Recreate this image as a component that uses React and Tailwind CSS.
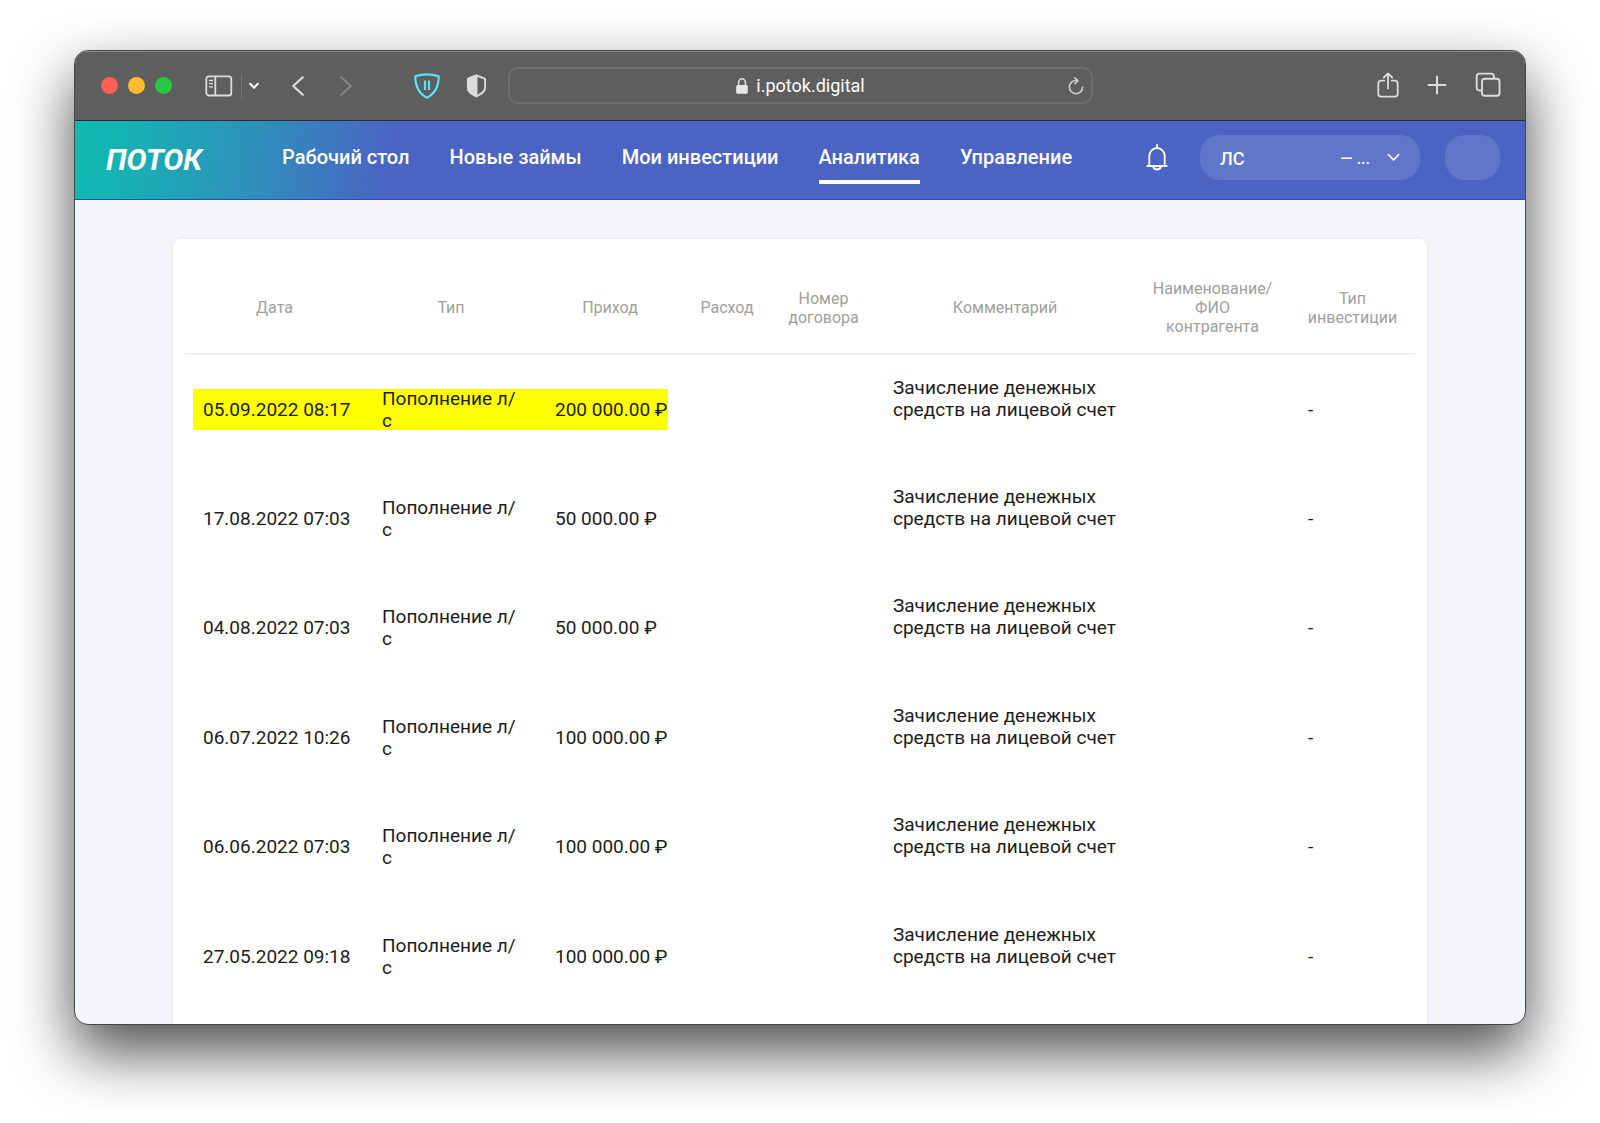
import { Fragment } from "react";

const NAV_ITEMS = [
  { label: "Рабочий стол" },
  { label: "Новые займы" },
  { label: "Мои инвестиции" },
  { label: "Аналитика", active: true },
  { label: "Управление" },
];

const COLUMNS = [
  { title: ["Дата"], width: "w-[179px]" },
  { title: ["Тип"], width: "w-[174px]" },
  { title: ["Приход"], width: "w-[144px]" },
  { title: ["Расход"], width: "w-[90px]" },
  { title: ["Номер", "договора"], width: "w-[103px]" },
  { title: ["Комментарий"], width: "w-[260px]" },
  { title: ["Наименование/", "ФИО", "контрагента"], width: "w-[155px]" },
  { title: ["Тип", "инвестиции"], width: "w-[125px]" },
];

const OPERATIONS = [
  { date: "05.09.2022 08:17", income: "200 000.00 ₽", marked: true },
  { date: "17.08.2022 07:03", income: "50 000.00 ₽" },
  { date: "04.08.2022 07:03", income: "50 000.00 ₽" },
  { date: "06.07.2022 10:26", income: "100 000.00 ₽" },
  { date: "06.06.2022 07:03", income: "100 000.00 ₽" },
  { date: "27.05.2022 09:18", income: "100 000.00 ₽" },
];

function Toolbar() {
  return (
    <div className="grid h-[70px] grid-cols-[1fr_585px_1fr] items-center border-b border-[#2a2a3a] bg-[#5e5e5f] text-[#dcdcdc] shadow-[inset_0_1px_0_#8a8a8a]">
      {/* Window buttons and navigation */}
      <div className="flex items-center pl-[26px]">
        <div className="flex gap-[10px]">
          <button aria-label="Close" className="size-[17px] rounded-full bg-[#ff5f57]" />
          <button aria-label="Minimize" className="size-[17px] rounded-full bg-[#febc2e]" />
          <button aria-label="Zoom" className="size-[17px] rounded-full bg-[#28c840]" />
        </div>
        <button aria-label="Sidebar" className="ml-[33px]">
          <svg width="28" height="22" viewBox="0 0 28 22" fill="none" stroke="currentColor" strokeWidth="1.8">
            <rect x="1.3" y="1.3" width="25" height="19.2" rx="2.6" />
            <path d="M10.3 1.3v19.2" />
            <path d="M4 5.5h4M4 8.7h4M4 11.9h4" strokeWidth="1.3" />
          </svg>
        </button>
        <span className="ml-2 h-6 w-px bg-[#747475]" />
        <button aria-label="Tab groups" className="ml-[7px]">
          <svg width="10" height="8" viewBox="0 0 10 8" fill="none" stroke="#f2f2f2" strokeWidth="2.2" strokeLinecap="round" strokeLinejoin="round">
            <path d="M1.2 1.8 5 5.8l3.8-4" />
          </svg>
        </button>
        <button aria-label="Back" className="ml-8">
          <svg width="14" height="20" viewBox="0 0 14 20" fill="none" stroke="currentColor" strokeWidth="2.2" strokeLinecap="round" strokeLinejoin="round">
            <path d="M11.8 1.3 2.2 10l9.6 8.7" />
          </svg>
        </button>
        <button aria-label="Forward" className="ml-[34px]">
          <svg width="14" height="20" viewBox="0 0 14 20" fill="none" stroke="#858586" strokeWidth="2.2" strokeLinecap="round" strokeLinejoin="round">
            <path d="m2.2 1.3 9.6 8.7-9.6 8.7" />
          </svg>
        </button>
        <button aria-label="Ad blocker" className="ml-[61px]">
          <svg width="26" height="26" viewBox="0 0 26 26" fill="none" stroke="#55e6f8" strokeWidth="2.2" strokeLinejoin="round">
            <path d="M13 1.3c4 0 7.8.6 11.7 2C24.7 13.5 21.5 20.5 13 24.7 4.5 20.5 1.3 13.5 1.3 3.3 5.2 1.9 9 1.3 13 1.3Z" />
            <path d="M11 7.5v9.5M15 7.5v9.5" />
          </svg>
        </button>
        <button aria-label="Privacy report" className="ml-[26px]">
          <svg width="21" height="24" viewBox="0 0 21 24" fill="none" stroke="currentColor" strokeWidth="1.9" strokeLinejoin="round">
            <path d="M10.5 1.5 18.2 4.3c.6.2.9.6.9 1.2v8.3c0 4.2-4.2 6.3-8.6 8.6-4.4-2.3-8.6-4.4-8.6-8.6V5.5c0-.6.3-1 .9-1.2Z" />
            <path d="M10.5 1.5v20.9c-4.4-2.3-8.6-4.4-8.6-8.6V5.5c0-.6.3-1 .9-1.2Z" fill="currentColor" />
          </svg>
        </button>
      </div>

      {/* Address bar */}
      <div className="flex h-[37px] items-center rounded-[10px] border-2 border-[#6d6d6e] pr-[7px] pl-6">
        <div className="flex flex-1 items-center justify-center gap-2">
          <svg width="12" height="16" viewBox="0 0 12 16" fill="none">
            <rect x="0.2" y="7" width="11.6" height="8.8" rx="1.6" fill="#e6e6e6" />
            <path d="M2.6 7.5V4.6a3.4 3.8 0 0 1 6.8 0v2.9" stroke="#e6e6e6" strokeWidth="1.5" />
          </svg>
          <span className="text-lg text-white">i.potok.digital</span>
        </div>
        <button aria-label="Reload">
          <svg width="16" height="18" viewBox="0 0 16 18" fill="none" stroke="#cfcfcf" strokeWidth="1.6" strokeLinecap="round" strokeLinejoin="round">
            <path d="M8.5 3.5a6.600 6.600 0 1 0 6.100 6.600" />
            <path d="m6.700.9 3.200 2.700-2.900 3" />
          </svg>
        </button>
      </div>

      <div className="flex items-center justify-end pr-6 pb-[2px]">
        <button aria-label="Share">
          <svg width="22" height="26" viewBox="0 0 22 26" fill="none" stroke="currentColor" strokeWidth="1.8" strokeLinecap="round" strokeLinejoin="round">
            <path d="M7.2 8.7H4A2.7 2.7 0 0 0 1.3 11.4V22A2.7 2.7 0 0 0 4 24.7h14a2.7 2.7 0 0 0 2.7-2.7V11.4A2.7 2.7 0 0 0 18 8.7h-3.2" />
            <path d="M11 16.5V1.5M6.8 5.5 11 1.4l4.2 4.1" />
          </svg>
        </button>
        <button aria-label="New tab" className="ml-7">
          <svg width="20" height="20" viewBox="0 0 20 20" fill="none" stroke="currentColor" strokeWidth="2" strokeLinecap="round">
            <path d="M10 1.5v17M1.5 10h17" />
          </svg>
        </button>
        <button aria-label="All tabs" className="ml-7">
          <svg width="26" height="25" viewBox="0 0 26 25" fill="none" stroke="currentColor" strokeWidth="1.9" strokeLinejoin="round">
            <rect x="7" y="6.7" width="17.5" height="17" rx="2.8" />
            <path d="M7 18.5H4.5A2.8 2.8 0 0 1 1.7 15.7V4.4a2.8 2.8 0 0 1 2.8-2.8h11.6a2.8 2.8 0 0 1 2.8 2.8v2.3" />
          </svg>
        </button>
      </div>
    </div>
  );
}

function Header() {
  return (
    <header className="flex h-[79px] items-center border-b border-[#2a4db8] bg-[#4b63c3] bg-[linear-gradient(97deg,#10bab1_0px,#14b5b3_40px,#308dbb_190px,#4b63c3_320px)] pr-[25px] pb-1 pl-[31px] text-white">
      <a href="#" className="w-44 pt-1 text-3xl font-bold italic">ПОТОК</a>
      <nav className="flex gap-10">
        {NAV_ITEMS.map((item) => (
          <a
            key={item.label}
            href="#"
            className={`border-y-4 border-t-transparent pt-[7px] pb-[9px] text-xl font-medium whitespace-nowrap ${
              item.active ? "border-b-white" : "border-b-transparent"
            }`}
          >
            {item.label}
          </a>
        ))}
      </nav>
      <div className="ml-auto flex items-center pb-[2px]">
        <button aria-label="Уведомления">
          <svg width="22" height="27" viewBox="0 0 22 27" fill="none" stroke="currentColor" strokeWidth="1.8" strokeLinecap="round" strokeLinejoin="round">
            <path d="M11 1v3M1.3 22h19.4M3.3 22V12.2a7.7 8.2 0 0 1 15.4 0V22" />
            <path d="M7 22.3c.4 2 2 3.2 4 3.2s3.600-1.200 4-3.200" />
          </svg>
        </button>
        <button className="ml-8 flex h-[45px] w-[220px] items-center rounded-[20px] bg-[#6076ca] pr-5 pl-5 text-lg font-medium">
          <span className="pt-1">ЛС</span>
          <span className="mr-[17px] ml-auto pt-1 text-base">— ...</span>
          <svg width="13" height="9" viewBox="0 0 13 9" fill="none" stroke="currentColor" strokeWidth="1.7" strokeLinecap="round" strokeLinejoin="round">
            <path d="m1.3 1.5 5.2 5.3 5.2-5.3" />
          </svg>
        </button>
        <button aria-label="Профиль" className="ml-[25px] h-[45px] w-[55px] rounded-[20px] bg-[#6076ca]" />
      </div>
    </header>
  );
}

function OperationRow({ date, income, marked }) {
  const mark = marked ? "bg-[#ffff00]" : "";
  return (
    <tr className="h-[109px] odd:h-[110px]">
      <td className="pl-2">
        <div className={`flex h-[41px] items-center pl-[10px] whitespace-nowrap ${mark}`}>{date}</div>
      </td>
      <td>
        <div className={`flex h-[41px] items-center pl-[18px] ${mark}`}>
          <span>
            Пополнение л/
            <br />с
          </span>
        </div>
      </td>
      <td>
        <div className={`flex h-[41px] w-fit items-center pr-px pl-[17px] whitespace-nowrap ${mark}`}>{income}</div>
      </td>
      <td />
      <td />
      <td className="pb-[22px] pl-[18px] whitespace-nowrap">
        Зачисление денежных
        <br />
        средств на лицевой счет
      </td>
      <td />
      <td className="pl-[18px]">-</td>
    </tr>
  );
}

export default function App() {
  return (
    <div className="bg-white px-[74px] pt-[50px] pb-[97px] font-[Roboto,sans-serif]">
      <div className="overflow-hidden rounded-[14px] border border-[#454749] bg-[#f4f5fa] shadow-[0_27px_60px_rgba(0,0,0,0.7)]">
        <Toolbar />
        <Header />
        <main className="px-[98px] pt-[39px]">
          <section className="rounded-t-lg bg-white px-3 pt-[23px] pb-[13px] shadow-[0_0_4px_rgba(60,80,160,0.1)]">
            <table className="w-full table-fixed text-left text-[19px] leading-[22px] text-[#1c1c1c]">
              <thead>
                <tr className="h-[92px] border-b-2 border-[#eeeff6] text-base leading-[19px] text-[#a0a0a0]">
                  {COLUMNS.map((col) => (
                    <th key={col.title.join(" ")} className={`text-center font-normal ${col.width}`}>
                      {col.title.map((line, i) => (
                        <Fragment key={line}>
                          {i > 0 && <br />}
                          {line}
                        </Fragment>
                      ))}
                    </th>
                  ))}
                </tr>
              </thead>
              <tbody>
                {OPERATIONS.map((op) => (
                  <OperationRow key={op.date} {...op} />
                ))}
              </tbody>
            </table>
          </section>
        </main>
      </div>
    </div>
  );
}
